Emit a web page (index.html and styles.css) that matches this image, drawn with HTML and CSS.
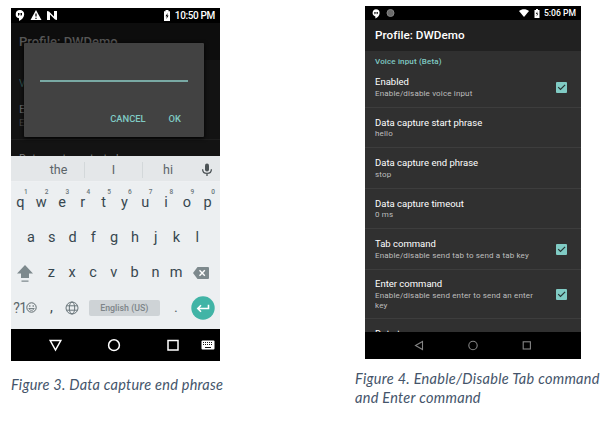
FILE: index.html
```
<!DOCTYPE html>
<html lang="en">
<head>
<meta charset="utf-8">
<title>Voice input figures</title>
<link rel="stylesheet" href="styles.css">
</head>
<body>
<main class="page">
  <figure class="fig fig-left">
    <div class="phone phone-left">
      <div class="status">
        <svg class="status-icons" width="46" height="15" viewBox="0 0 46 15">
          <path fill="#fff" d="M9 2a4.200 4.200 0 0 0-1 8.300V13c3-1.500 5.200-4 5.200-6.800A4.200 4.200 0 0 0 9 2z"/>
          <path fill="#000" d="M7 5h1.500v1.700l-.8 1H7l.4-1H7zM9.500 5H11v1.700l-.8 1h-.7l.4-1h-.4z"/>
          <path fill="#fff" d="M25 2l5.500 10h-11z"/>
          <path stroke="#000" stroke-width="1.200" d="M25 5.500v3M25 9.700v1.200"/>
          <path fill="#fff" d="M36 3l2 .5 5 5V3h3v9l-2-.5-5-5V12h-3z"/>
        </svg>
        <svg class="battery" width="8" height="11" viewBox="0 0 8 11">
          <path fill="#fff" d="M2.500 0h3v1.300H7V11H1V1.300h1.500z"/>
          <path fill="#000" d="M4.600 3L2.500 6.300h1.300L3.400 9l2.200-3.400H4.300z"/>
        </svg>
        <span class="clock">10:50 PM</span>
      </div>
      <div class="dim-bar"><span>Profile: DWDemo</span></div>
      <div class="dim-list">
        <div class="dim-section">Voice input</div>
        <div class="dim-item"><b>Enabled</b><small>Enable/disable</small></div>
        <div class="dim-next">Data capture start phrase</div>
      </div>
      <div class="dialog">
        <div class="field"></div>
        <div class="actions"><span>CANCEL</span><span>OK</span></div>
      </div>
      <div class="suggest">
        <span class="s-the">the</span><span class="s-i">I</span><span class="s-hi">hi</span>
        <svg width="12" height="14" viewBox="0 0 12 14"><rect x="4" y="0.500" width="4" height="8" rx="2" fill="#4c5356"/><path d="M1.600 6.200c0 5.600 8.800 5.600 8.800 0M6 10.500V13" fill="none" stroke="#4c5356" stroke-width="1.300"/></svg>
      </div>
      <div class="keys">
        <div class="row row-q">
          <span>q<i>1</i></span><span>w<i>2</i></span><span>e<i>3</i></span><span>r<i>4</i></span><span>t<i>5</i></span><span>y<i>6</i></span><span>u<i>7</i></span><span>i<i>8</i></span><span>o<i>9</i></span><span>p<i>0</i></span>
        </div>
        <div class="row row-a"><span>a</span><span>s</span><span>d</span><span>f</span><span>g</span><span>h</span><span>j</span><span>k</span><span>l</span></div>
        <div class="row row-z">
          <svg class="shift" width="16" height="18" viewBox="0 0 16 18"><path fill="#7d898d" d="M8 0l8 8.500h-4V13H4V8.500H0zM4.500 15.500h7v1.200h-7z"/></svg>
          <span>z</span><span>x</span><span>c</span><span>v</span><span>b</span><span>n</span><span>m</span>
          <svg class="back" width="16" height="12" viewBox="0 0 16 12"><path fill="#7d898d" d="M4.500 0H15a1 1 0 0 1 1 1v10a1 1 0 0 1-1 1H4.500L0 6z"/><path stroke="#fff" stroke-width="1.400" d="M6.500 3.300l5.300 5.400M11.800 3.300L6.500 8.700"/></svg>
        </div>
        <div class="row row-space">
          <span class="sym">?1</span>
          <svg class="smile" width="11" height="11" viewBox="0 0 11 11"><circle cx="5.500" cy="5.500" r="4.700" fill="none" stroke="#5d686c"/><circle cx="3.800" cy="4" r=".8" fill="#5d686c"/><circle cx="7.200" cy="4" r=".8" fill="#5d686c"/><path d="M2.800 6.500c1 2.400 4.400 2.400 5.400 0z" fill="none" stroke="#5d686c" stroke-width=".8"/></svg>
          <span class="comma">,</span>
          <svg class="globe" width="14" height="14" viewBox="0 0 14 14" fill="none" stroke="#69757a"><circle cx="7" cy="7" r="6"/><ellipse cx="7" cy="7" rx="2.700" ry="6"/><path d="M1.500 4.800h11M1.500 9.200h11"/></svg>
          <span class="space">English (US)</span>
          <span class="dot">.</span>
          <svg class="enter" width="24" height="24" viewBox="0 0 24 24"><circle cx="12" cy="12" r="11.700" fill="#41b4a6"/><path d="M17.500 8.800v3.700H7.500M10 9.300l-3.200 3.200L10 15.700" fill="none" stroke="#fff" stroke-width="1.600"/></svg>
        </div>
      </div>
      <svg class="nav" width="209" height="32" viewBox="0 0 209 32" fill="none" stroke="#fff" stroke-width="1.500">
        <path d="M39.200 11.500h10.600l-5.300 9.500z"/><circle cx="103" cy="16.200" r="5.400"/><rect x="157" y="11.500" width="10" height="9.500"/>
        <rect x="190.500" y="11.500" width="13" height="9" rx="1" fill="#fff" stroke="none"/><path stroke="#111" stroke-width="1" stroke-dasharray="1 1" d="M192 13.500h10M192 15.500h10"/><path stroke="#111" stroke-width="1" d="M194 18.500h6"/>
      </svg>
    </div>
    <figcaption class="cap cap-left">Figure 3. Data capture end phrase</figcaption>
  </figure>

  <figure class="fig fig-right">
    <div class="phone phone-right">
      <div class="status status-r">
        <svg class="status-icons" width="34" height="14" viewBox="0 0 34 14">
          <path fill="#fff" d="M11 3.300a3.600 3.600 0 0 0-.6 7.100v2c2.500-1.200 4.200-3.200 4.200-5.500A3.600 3.600 0 0 0 11 3.300z"/><path fill="#000" d="M9.300 6h1.300v1.500l-.7.800h-.4zM11.500 6h1.300v1.500l-.7.800h-.4z"/>
          <circle cx="25.500" cy="7" r="3.500" fill="#6b6b6b" stroke="#858585" stroke-width="1"/>
        </svg>
        <svg class="wifi" width="10" height="8" viewBox="0 0 10 8"><path fill="#fff" d="M0 2c3-2.500 7-2.500 10 0L5 8z"/></svg>
        <svg class="battery" width="6" height="9" viewBox="0 0 6 9"><path fill="#fff" d="M2 0h2v1h1.500v8h-5V1H2z"/><path fill="#000" d="M3.400 2.300L1.900 5H3l-.4 2.400L4.200 4.500H3.100z"/></svg>
        <span class="clock">5:06 PM</span>
      </div>
      <div class="appbar"><span>Profile: DWDemo</span></div>
      <div class="list">
        <div class="item first">
          <div class="section">Voice input (Beta)</div>
          <div class="line"><div class="txt"><b>Enabled</b><small class="w1">Enable/disable voice input</small></div><svg class="check" width="11" height="11" viewBox="0 0 11 11"><rect width="11" height="11" rx="1" fill="#80cbc4"/><path d="M2.200 5.200l2.300 2.300 4.600-4.600" fill="none" stroke="#263433" stroke-width="1.200"/></svg></div>
        </div>
        <div class="item"><div class="txt"><b>Data capture start phrase</b><small>hello</small></div></div>
        <div class="item"><div class="txt"><b>Data capture end phrase</b><small>stop</small></div></div>
        <div class="item"><div class="txt"><b>Data capture timeout</b><small>0 ms</small></div></div>
        <div class="item"><div class="txt"><b>Tab command</b><small>Enable/disable send tab to send a tab key</small></div><svg class="check" width="11" height="11" viewBox="0 0 11 11"><rect width="11" height="11" rx="1" fill="#80cbc4"/><path d="M2.200 5.200l2.300 2.300 4.600-4.600" fill="none" stroke="#263433" stroke-width="1.200"/></svg></div>
        <div class="item tall"><div class="txt"><b>Enter command</b><small>Enable/disable send enter to send an enter<br>key</small></div><svg class="check" width="11" height="11" viewBox="0 0 11 11"><rect width="11" height="11" rx="1" fill="#80cbc4"/><path d="M2.200 5.200l2.300 2.300 4.600-4.600" fill="none" stroke="#263433" stroke-width="1.200"/></svg></div>
        <div class="item last"><div class="txt"><b>Data type</b></div></div>
      </div>
      <svg class="nav" width="216" height="27" viewBox="0 0 216 27" fill="none" stroke="#858585" stroke-width="1.100">
        <path d="M57.500 9.500v8l-7-4z"/><circle cx="108" cy="13.500" r="4.200"/><rect x="158.200" y="9.800" width="7.200" height="7.200"/>
      </svg>
    </div>
    <figcaption class="cap cap-right">Figure 4. Enable/Disable Tab command<br><span>and Enter command</span></figcaption>
  </figure>
</main>
</body>
</html>
```
FILE: styles.css
```
* { box-sizing: border-box; }
body { margin: 0; background: #fff; font-family: Roboto, "Liberation Sans", sans-serif; }
.page { display: flex; width: 608px; height: 423px; overflow: hidden; }
.fig { margin: 0; white-space: nowrap; }
.fig-left { width: 354px; padding: 8px 0 0 11px; }
.fig-right { width: 254px; padding: 6px 0 0 11px; }
.phone { position: relative; overflow: hidden; background: #000; display: flex; flex-direction: column; }
.phone > * { flex-shrink: 0; }
.phone-left { width: 209px; height: 353px; }
.phone-right { width: 216px; height: 353px; }
svg { display: block; flex-shrink: 0; }

.status { height: 15px; display: flex; align-items: center; color: #fff; padding-right: 5px; }
.status-icons { margin-right: auto; }
.clock { font-size: 10px; letter-spacing: -0.350px; font-weight: 500; line-height: 15px; }
.status .battery { margin-right: 4px; }
.status-r { height: 14px; }
.status-r .wifi { margin-right: 5px; }
.status-r .clock { font-size: 8.600px; letter-spacing: 0; line-height: 14px; }

.dim-bar { height: 37px; background: #0d0d0d; padding: 11px 0 0 8px; color: #575757; font-size: 13px; font-weight: 500; line-height: 15px; }
.dim-list { height: 96px; overflow: hidden; background: #131313; padding-left: 8px; }
.dim-section { margin-top: 18px; height: 22px; color: #335552; font-size: 10px; line-height: 12px; }
.dim-item { height: 40px; margin-left: -8px; padding: 2px 0 0 8px; border-bottom: 1px solid #1e1e1e; }
.dim-item b { display: block; font-size: 11.500px; line-height: 14px; font-weight: 400; color: #666; }
.dim-item small { display: block; font-size: 9.500px; line-height: 13px; color: #454545; }
.dim-next { padding-top: 12px; font-size: 11px; line-height: 13px; color: #777; }
.dialog { position: absolute; left: 13px; top: 35px; width: 180px; height: 94px; background: #424242; border-radius: 1px; box-shadow: 0 1px 4px #000; padding: 36.500px 16px 0; }
.field { height: 2px; background: #79a9a4; }
.actions { display: flex; justify-content: flex-end; gap: 23px; margin-top: 29px; padding-right: 7px; color: #80cbc4; font-size: 9.400px; font-weight: 500; line-height: 15px; }

.suggest { height: 26px; background: #e4e7e9; border-bottom: 1px solid #eef0f2; display: flex; align-items: center; color: #5b6468; font-size: 12.500px; padding-top: 2px; }
.suggest span { height: 16px; line-height: 16px; text-align: center; }
.s-the { width: 74px; padding-left: 22px; border-right: 1px solid #d3d8da; }
.s-i { width: 58px; border-right: 1px solid #d3d8da; }
.s-hi { width: 49px; padding-left: 1px; }
.suggest svg { margin-left: 9px; }

.keys { height: 147px; background: #eceff1; padding-top: 3px; color: #37474f; font-size: 14.500px; }
.row { height: 35px; display: flex; align-items: center; }
.row span { text-align: center; width: 20.800px; position: relative; flex-shrink: 0; }
.row-q { margin-left: -1px; }
.row i { position: absolute; left: 14px; top: -6px; font-size: 6.500px; line-height: 8px; font-style: normal; color: #69757a; font-weight: 500; }
.row-a { padding-left: 9.500px; }
.row-z .shift { margin: 2px 8px 0 6px; }
.row-z .back { margin-left: 6px; }
.row-space .sym { width: 14px; margin-left: 2px; font-size: 14px; letter-spacing: -0.600px; color: #5d686c; }
.row-space .smile { margin-left: -1px; margin-right: 4px; }
.row-space .globe { margin-left: 3px; }
.row-space .space { width: 71px; height: 16px; margin-left: 10px; border-radius: 2px; background: #ced3d6; color: #7d8589; font-size: 8.800px; line-height: 16px; font-weight: 500; }
.row-space .dot { width: 32px; color: #5d686c; }
.row-space .enter { margin-left: -1px; }

.appbar { height: 31px; background: #212121; color: #fff; padding: 8px 0 0 10px; font-size: 11.700px; letter-spacing: 0.050px; font-weight: 500; line-height: 15px; }
.list { height: 281px; background: #303030; overflow: hidden; }
.item { height: 40.500px; border-bottom: 1px solid #3d3d3d; display: flex; align-items: center; padding: 1px 14px 0 10px; }
.item b { display: block; color: #fff; font-weight: 400; font-size: 9.500px; line-height: 12.500px; }
.item small { display: block; color: #bebebe; font-size: 8px; letter-spacing: 0.150px; line-height: 10px; }
.check { margin-left: auto; }
.item.first { height: 56.500px; display: block; padding-top: 5px; }
.section { color: #80cbc4; font-size: 8px; letter-spacing: 0.150px; line-height: 12px; font-weight: 500; }
.line { display: flex; align-items: center; margin-top: 8px; }
.item.tall { height: 49.500px; }
.item.last { align-items: flex-start; padding-top: 9px; border: 0; }

.cap { font-family: Lato, "Liberation Sans", sans-serif; font-style: italic; font-weight: 400; color: #44546a; font-size: 14.500px; letter-spacing: 0.240px; line-height: 19px; }
.cap-left { margin-top: 14px; }
.cap-right { margin: 10px 0 0 -10px; letter-spacing: 0.290px; }
```
